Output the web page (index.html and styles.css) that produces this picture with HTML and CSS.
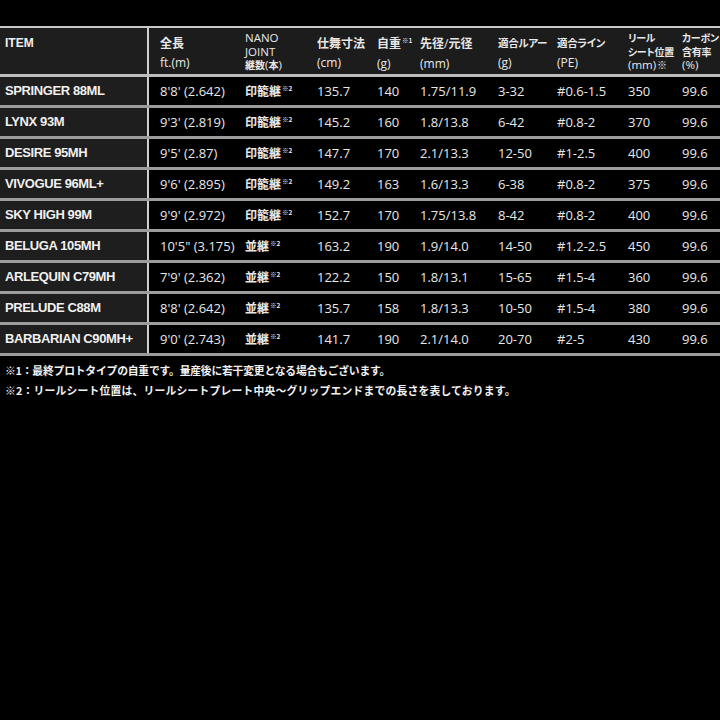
FILE: index.html
```html
<!DOCTYPE html>
<html lang="ja">
<head>
<meta charset="utf-8">
<title>Spec table</title>
<link rel="stylesheet" href="styles.css">
</head>
<body>
<div class="top"></div>
<div class="spec">
  <div class="row head">
    <div class="c item h2"><span class="ln">ITEM</span></div>
    <div class="c h2"><span class="ln jp">全長</span><span class="ln">ft.(m)</span></div>
    <div class="c h3"><span class="ln">NANO</span><span class="ln">JOINT</span><span class="ln"><span class="jp">継数</span>(<span class="jp">本</span>)</span></div>
    <div class="c h2"><span class="ln jp">仕舞寸法</span><span class="ln">(cm)</span></div>
    <div class="c h2"><span class="ln"><span class="jp">自重</span><sup class="nt">※1</sup></span><span class="ln">(g)</span></div>
    <div class="c h2"><span class="ln"><span class="jp">先径</span>/<span class="jp">元径</span></span><span class="ln">(mm)</span></div>
    <div class="c h2"><span class="ln jp kana">適合ルアー</span><span class="ln">(g)</span></div>
    <div class="c h2"><span class="ln jp kana">適合ライン</span><span class="ln">(PE)</span></div>
    <div class="c h3"><span class="ln jp kana">リール</span><span class="ln jp kana">シート位置</span><span class="ln">(mm)<span class="jp mk">※</span></span></div>
    <div class="c h3 last"><span class="ln jp kana">カーボン</span><span class="ln jp kana">含有率</span><span class="ln">(%)</span></div>
  </div>

  <div class="row"><div class="c item">SPRINGER 88ML</div><div class="c">8'8' (2.642)</div><div class="c"><span class="jp">印籠継</span><sup class="nt">※2</sup></div><div class="c">135.7</div><div class="c">140</div><div class="c">1.75/11.9</div><div class="c">3-32</div><div class="c">#0.6-1.5</div><div class="c">350</div><div class="c">99.6</div></div>
  <div class="row"><div class="c item">LYNX 93M</div><div class="c">9'3' (2.819)</div><div class="c"><span class="jp">印籠継</span><sup class="nt">※2</sup></div><div class="c">145.2</div><div class="c">160</div><div class="c">1.8/13.8</div><div class="c">6-42</div><div class="c">#0.8-2</div><div class="c">370</div><div class="c">99.6</div></div>
  <div class="row"><div class="c item">DESIRE 95MH</div><div class="c">9'5' (2.87)</div><div class="c"><span class="jp">印籠継</span><sup class="nt">※2</sup></div><div class="c">147.7</div><div class="c">170</div><div class="c">2.1/13.3</div><div class="c">12-50</div><div class="c">#1-2.5</div><div class="c">400</div><div class="c">99.6</div></div>
  <div class="row"><div class="c item">VIVOGUE 96ML+</div><div class="c">9'6' (2.895)</div><div class="c"><span class="jp">印籠継</span><sup class="nt">※2</sup></div><div class="c">149.2</div><div class="c">163</div><div class="c">1.6/13.3</div><div class="c">6-38</div><div class="c">#0.8-2</div><div class="c">375</div><div class="c">99.6</div></div>
  <div class="row"><div class="c item">SKY HIGH 99M</div><div class="c">9'9' (2.972)</div><div class="c"><span class="jp">印籠継</span><sup class="nt">※2</sup></div><div class="c">152.7</div><div class="c">170</div><div class="c">1.75/13.8</div><div class="c">8-42</div><div class="c">#0.8-2</div><div class="c">400</div><div class="c">99.6</div></div>
  <div class="row"><div class="c item">BELUGA 105MH</div><div class="c">10'5" (3.175)</div><div class="c"><span class="jp">並継</span><sup class="nt">※2</sup></div><div class="c">163.2</div><div class="c">190</div><div class="c">1.9/14.0</div><div class="c">14-50</div><div class="c">#1.2-2.5</div><div class="c">450</div><div class="c">99.6</div></div>
  <div class="row"><div class="c item">ARLEQUIN C79MH</div><div class="c">7'9' (2.362)</div><div class="c"><span class="jp">並継</span><sup class="nt">※2</sup></div><div class="c">122.2</div><div class="c">150</div><div class="c">1.8/13.1</div><div class="c">15-65</div><div class="c">#1.5-4</div><div class="c">360</div><div class="c">99.6</div></div>
  <div class="row"><div class="c item">PRELUDE C88M</div><div class="c">8'8' (2.642)</div><div class="c"><span class="jp">並継</span><sup class="nt">※2</sup></div><div class="c">135.7</div><div class="c">158</div><div class="c">1.8/13.3</div><div class="c">10-50</div><div class="c">#1.5-4</div><div class="c">380</div><div class="c">99.6</div></div>
  <div class="row"><div class="c item">BARBARIAN C90MH+</div><div class="c">9'0' (2.743)</div><div class="c"><span class="jp">並継</span><sup class="nt">※2</sup></div><div class="c">141.7</div><div class="c">190</div><div class="c">2.1/14.0</div><div class="c">20-70</div><div class="c">#2-5</div><div class="c">430</div><div class="c">99.6</div></div>
</div>
<div class="notes">
  <p class="n1">※1：最終プロトタイプの自重です。量産後に若干変更となる場合もございます。</p>
  <p class="n2">※2：リールシート位置は、リールシートプレート中央～グリップエンドまでの長さを表しております。</p>
</div>
</body>
</html>
```

FILE: styles.css
```css
html, body {
  margin: 0;
  padding: 0;
  background: #000;
  color: #e8e8e8;
  font-family: "Open Sans", "Noto Sans", sans-serif;
  width: 720px;
  height: 720px;
  overflow: hidden;
}

.top {
  height: 26px;
}

.spec {
  border-top: 2px solid #c8c8c8;
}

.row {
  display: grid;
  grid-template-columns: 149px 85px 72px 60px 43px 78px 59px 71px 54px 49px;
  height: 31px;
  box-sizing: border-box;
  border-bottom: 3px solid #9c9c9c;
  font-size: 13px;
  line-height: 28px;
}

.row.head {
  height: 49px;
  background: #1c1c1c;
  border-bottom-color: #bdbdbd;
  font-size: 12px;
}

.c {
  padding-left: 11px;
  white-space: nowrap;
  box-sizing: border-box;
}

.c.item {
  padding-left: 5px;
  background: #1e1e1e;
  border-right: 2px solid #cfcfcf;
  font-family: "Liberation Sans", Arial, sans-serif;
  font-weight: 700;
  letter-spacing: -0.4px;
  color: #f0f0f0;
}

.head .c.item {
  font-size: 12px;
  letter-spacing: 0;
}

.h2 {
  padding-top: 5px;
  line-height: 20px;
}

.h3 {
  padding-top: 3px;
  line-height: 13px;
  font-size: 11.5px;
}

.ln {
  display: block;
}

.h3 .ln {
  height: 13.5px;
  overflow: visible;
}

.jp {
  font-family: "Noto Sans CJK JP", sans-serif;
  font-weight: 700;
}

.kana {
  font-feature-settings: "palt";
  letter-spacing: -0.3px;
}

.row .jp {
  font-size: 12px;
}

.head .jp {
  font-size: 12px;
}

.head .h3 .jp {
  font-size: 10px;
}

.head .kana {
  font-size: 10.5px;
}

.nt {
  font-family: "Noto Sans CJK JP", sans-serif;
  font-size: 6.5px;
  font-weight: 700;
  vertical-align: 5px;
  line-height: 0;
  margin-left: 1px;
}

.head .mk {
  font-size: 8px;
  font-weight: 400;
  margin-left: 1px;
}

.notes {
  padding: 4px 0 0 5px;
  font-family: "Noto Sans CJK JP", sans-serif;
  font-weight: 700;
  font-size: 10.8px;
  line-height: 20px;
  color: #f2f2f2;
}

.notes p {
  margin: 0;
}

.notes .n1 {
  letter-spacing: -0.2px;
}

.notes .n2 {
  letter-spacing: 0.2px;
}
```
